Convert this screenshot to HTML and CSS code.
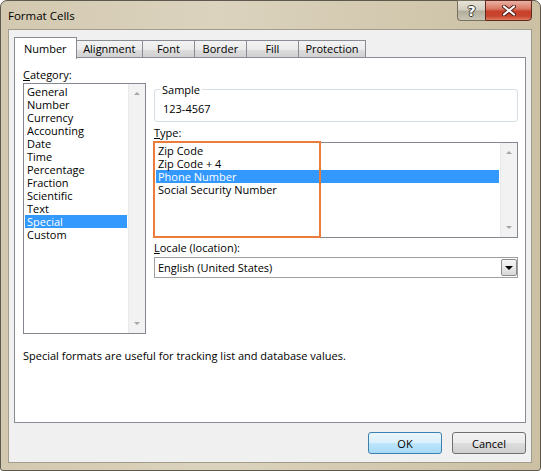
FILE: index.html
```html
<!DOCTYPE html>
<html>
<head>
<meta charset="utf-8">
<title>Format Cells</title>
<link rel="stylesheet" href="styles.css">
</head>
<body>
<div class="window">
  <div class="titlebar">
    <span class="title">Format Cells</span>
    <div class="caption-btns">
      <div class="cap help">?</div>
      <div class="cap close">
        <svg width="14" height="11" viewBox="0 0 14 11">
          <path d="M2 1.5 L12 9.5 M12 1.5 L2 9.5" stroke="#4a1a12" stroke-width="4" stroke-linecap="round"/>
          <path d="M2 1.5 L12 9.5 M12 1.5 L2 9.5" stroke="#ffffff" stroke-width="2.2" stroke-linecap="round"/>
        </svg>
      </div>
    </div>
  </div>
  <div class="client">
    <div class="tabs">
      <div class="tab active">Number</div>
      <div class="tab">Alignment</div>
      <div class="tab">Font</div>
      <div class="tab">Border</div>
      <div class="tab">Fill</div>
      <div class="tab">Protection</div>
    </div>
    <div class="panel">
      <div class="label"><u>C</u>ategory:</div>
      <div class="listbox cat">
        <ul class="items">
          <li>General</li>
          <li>Number</li>
          <li>Currency</li>
          <li>Accounting</li>
          <li>Date</li>
          <li>Time</li>
          <li>Percentage</li>
          <li>Fraction</li>
          <li>Scientific</li>
          <li>Text</li>
          <li class="sel">Special</li>
          <li>Custom</li>
        </ul>
        <div class="scrollbar"><span class="arrow up"></span><span class="arrow down"></span></div>
      </div>
      <div class="right">
        <fieldset class="sample">
          <legend>Sample</legend>
          <div class="sample-value">123-4567</div>
        </fieldset>
        <div class="label"><u>T</u>ype:</div>
        <div class="listbox type">
          <ul class="items">
            <li>Zip Code</li>
            <li>Zip Code + 4</li>
            <li class="sel">Phone Number</li>
            <li>Social Security Number</li>
          </ul>
          <div class="scrollbar"><span class="arrow up"></span><span class="arrow down"></span></div>
          <div class="callout"></div>
        </div>
        <div class="label"><u>L</u>ocale (location):</div>
        <div class="combo">
          <span class="combo-text">English (United States)</span>
          <span class="combo-btn"><span class="tri"></span></span>
        </div>
      </div>
      <p class="desc">Special formats are useful for tracking list and database values.</p>
    </div>
    <div class="buttons">
      <div class="btn default">OK</div>
      <div class="btn">Cancel</div>
    </div>
  </div>
</div>
</body>
</html>
```

FILE: styles.css
```css
html, body {
  margin: 0;
  padding: 0;
  background: #ffffff;
}

body {
  font-family: "Segoe UI", "Open Sans", "Noto Sans", sans-serif;
  font-size: 11px;
  color: #000000;
}

.window {
  width: 541px;
  height: 471px;
  box-sizing: border-box;
  border: 1px solid #5d594d;
  border-radius: 7px 7px 3px 3px;
  background: linear-gradient(90deg, #d3c9b0 0%, #dcd3bf 40%, #d2c8ae 75%, #cbc0a4 100%);
  padding: 0 8px 7px 7px;
  display: flex;
  flex-direction: column;
}

.titlebar {
  height: 28px;
  display: flex;
  justify-content: space-between;
  align-items: flex-start;
}

.title {
  font-size: 11.5px;
  line-height: 13px;
  margin-top: 8px;
  margin-left: 0;
  color: #000;
}

.caption-btns {
  display: flex;
  margin-top: -1px;
}

.cap {
  height: 21px;
  box-sizing: border-box;
  display: flex;
  align-items: center;
  justify-content: center;
}

.help {
  width: 28px;
  border: 1px solid #77725f;
  border-right: none;
  border-radius: 0 0 0 4px;
  background: linear-gradient(180deg, #e6e2d6 0%, #d3cfc2 45%, #b3ae9c 55%, #c9c5b5 100%);
  color: #ffffff;
  font-family: "DejaVu Sans", sans-serif;
  font-weight: bold;
  font-size: 14px;
  text-shadow: 1px 0 0 #3e3b33, -1px 0 0 #3e3b33, 0 1px 0 #3e3b33, 0 -1px 0 #3e3b33;
}

.close {
  width: 47px;
  border: 1px solid #5e2a20;
  border-radius: 0 0 4px 0;
  background: linear-gradient(180deg, #eab1a4 0%, #db7a66 40%, #c9402a 55%, #c8452f 80%, #e07a5f 100%);
}

.client {
  height: 434px;
  box-sizing: border-box;
  border: 1px solid #a29c8b;
  background: #f0f0f0;
  padding: 7px 5px 7px 5px;
  display: flex;
  flex-direction: column;
}

.tabs {
  display: flex;
  height: 21px;
  margin-bottom: -1px;
}

.tab {
  box-sizing: border-box;
  height: 18px;
  margin-top: 3px;
  padding: 0 6.5px;
  min-width: 53px;
  text-align: center;
  line-height: 16px;
  border: 1px solid #898c95;
  border-bottom: none;
  margin-left: -1px;
  background: linear-gradient(180deg, #f3f3f3 0%, #ebebeb 50%, #dddddd 51%, #cfcfcf 100%);
}

.tab.active {
  margin-left: 0;
  margin-top: 0;
  height: 22px;
  line-height: 22px;
  padding: 0 9px;
  background: #ffffff;
  z-index: 1;
}

.panel {
  height: 366px;
  box-sizing: border-box;
  border: 1px solid #898c95;
  background: #ffffff;
  padding: 10px 7px 0 8px;
  display: grid;
  grid-template-columns: 123px 364px;
  grid-template-rows: 13px auto auto;
  align-content: start;
  column-gap: 8px;
  row-gap: 2px;
  align-items: start;
}

.label {
  line-height: 13px;
  height: 13px;
  white-space: nowrap;
}

.panel > .label {
  grid-column: 1;
}

.listbox {
  box-sizing: border-box;
  border: 1px solid #828790;
  background: #ffffff;
  display: flex;
  position: relative;
}

.listbox.cat {
  grid-column: 1;
  grid-row: 2;
  height: 251px;
}

.listbox.type {
  height: 96px;
  margin: 3px 0 0;
}

.items {
  list-style: none;
  margin: 0;
  padding: 1px 1px 0 1px;
  flex: 1;
}

.items li {
  height: 13px;
  line-height: 13px;
  padding-left: 2px;
  white-space: nowrap;
}

.items li.sel {
  background: #3399ff;
  color: #ffffff;
}

.scrollbar {
  width: 17px;
  flex: none;
  background: #f2f2f2;
  border-left: 1px solid #e9e9e9;
  box-sizing: border-box;
  display: flex;
  flex-direction: column;
  justify-content: space-between;
  align-items: center;
  padding: 8px 0 8px;
}

.arrow {
  width: 0;
  height: 0;
  border-left: 3px solid transparent;
  border-right: 3px solid transparent;
}

.arrow.up {
  border-bottom: 3px solid #a6a6a6;
}

.arrow.down {
  border-top: 3px solid #a6a6a6;
}

.callout {
  position: absolute;
  left: -2px;
  top: -2px;
  width: 168px;
  height: 97px;
  box-sizing: border-box;
  border: 2px solid #ec7c3c;
  pointer-events: none;
}

.right {
  grid-column: 2;
  grid-row: 2;
  display: flex;
  flex-direction: column;
}

.sample {
  margin: 0;
  padding: 0 8px 4px 8px;
  border: 1px solid #d5dfe5;
  border-radius: 3px;
  min-width: 0;
  height: 39px;
  box-sizing: border-box;
}

.sample legend {
  padding: 0 2px;
  margin-left: -3px;
  line-height: 13px;
}

.sample-value {
  line-height: 13px;
  margin-top: 6px;
}

.right > .label {
  margin-top: 4px;
}

.right > .label + .combo {
  margin-top: 3px;
}

.combo {
  box-sizing: border-box;
  height: 21px;
  border: 1px solid #a0a0a0;
  display: flex;
  align-items: center;
  justify-content: space-between;
  padding: 1px 0 1px 3px;
}

.listbox.type + .label {
  margin-top: 3px;
}

.combo-text {
  line-height: 13px;
}

.combo-btn {
  width: 16px;
  height: 17px;
  box-sizing: border-box;
  border: 1px solid #8c8c8c;
  border-radius: 2px;
  background: linear-gradient(180deg, #f6f6f6 0%, #e8e8e8 50%, #d8d8d8 100%);
  display: flex;
  align-items: center;
  justify-content: center;
}

.tri {
  width: 0;
  height: 0;
  border-left: 4px solid transparent;
  border-right: 4px solid transparent;
  border-top: 4px solid #000000;
}

.desc {
  grid-column: 1 / span 2;
  grid-row: 3;
  margin: 13px 0 0;
  line-height: 13px;
  white-space: nowrap;
}

.buttons {
  display: flex;
  justify-content: flex-end;
  gap: 10px;
  margin-top: 9px;
}

.btn {
  width: 74px;
  height: 22px;
  box-sizing: border-box;
  border: 1px solid #707070;
  border-radius: 3px;
  background: linear-gradient(180deg, #f2f2f2 0%, #ebebeb 50%, #dddddd 51%, #cfcfcf 100%);
  display: flex;
  align-items: center;
  justify-content: center;
  line-height: 13px;
}

.btn.default {
  border-color: #3c7fb1;
  background: linear-gradient(180deg, #eaf6fd 0%, #d9f0fc 50%, #bee6fd 51%, #a7d9f5 100%);
}
```
